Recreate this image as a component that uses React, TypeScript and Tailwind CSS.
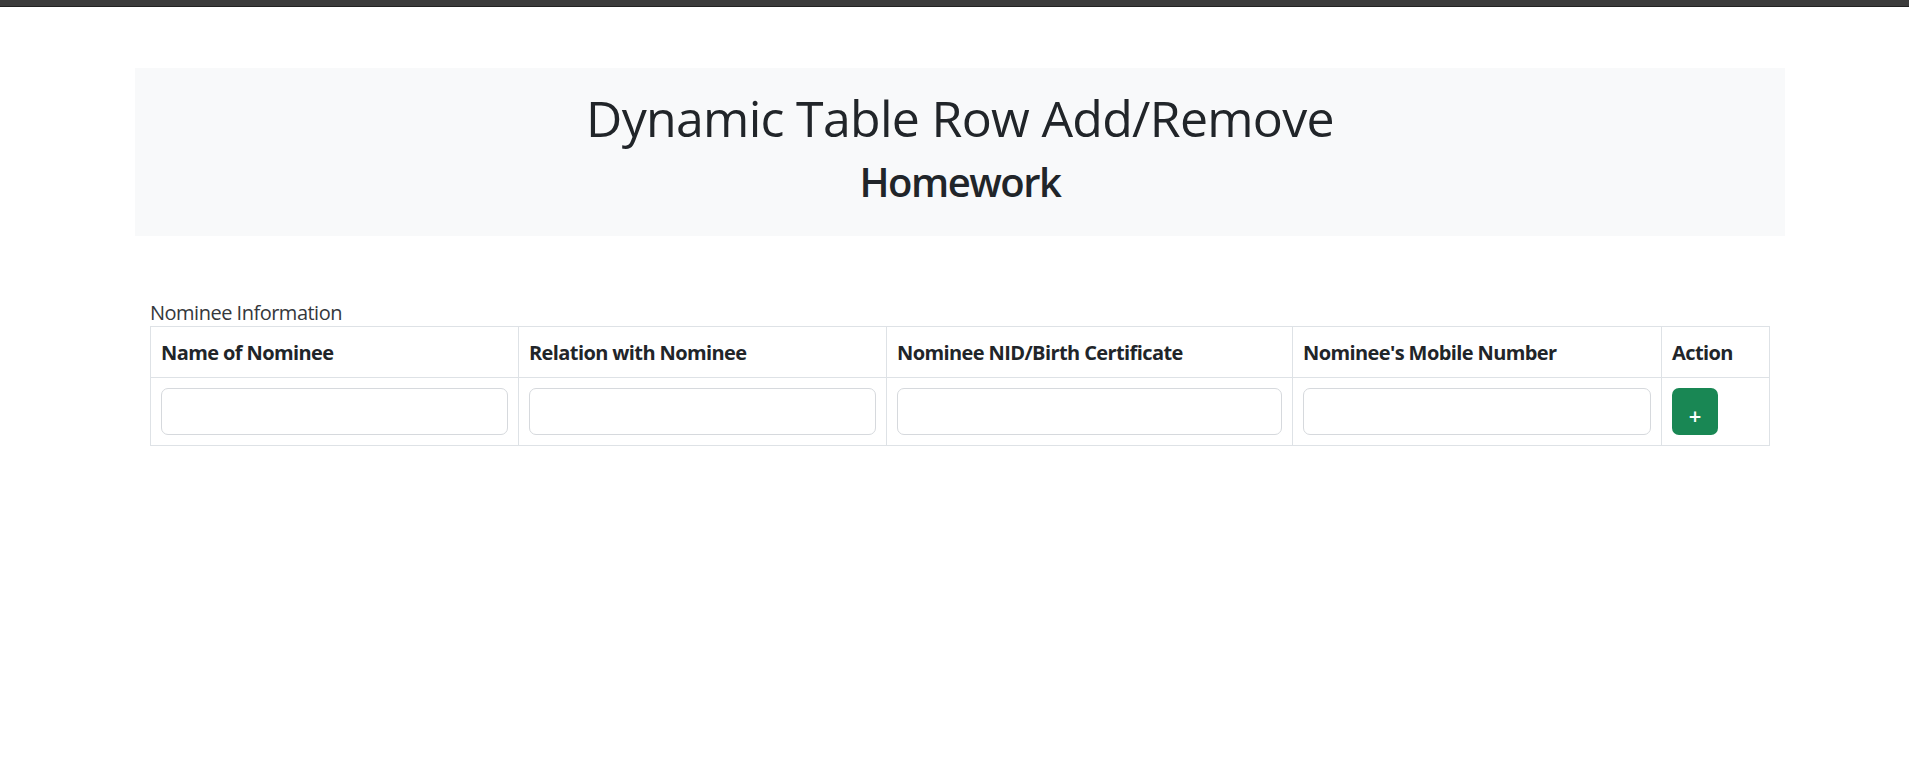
import React from 'react';

const columns = [
  { label: 'Name of Nominee', width: 'w-[368px]' },
  { label: 'Relation with Nominee', width: 'w-[368px]' },
  { label: 'Nominee NID/Birth Certificate', width: 'w-[406px]' },
  { label: "Nominee's Mobile Number", width: 'w-[369px]' },
];

const App: React.FC = () => {
  return (
    <div
      className="min-h-[766px] bg-white text-[#212529]"
      style={{ fontFamily: '"Open Sans", "Noto Sans", sans-serif' }}
    >
      {/* window edge */}
      <div className="h-[6px] bg-[#3c3c3c]" />
      <div className="h-px bg-[#222222]" />

      <div className="ml-[135px] w-[1650px] pt-[61px]">
        {/* Header */}
        <div className="bg-[#f8f9fa] p-[20px] text-center">
          <h1 className="mb-[10px] text-[50px] leading-[60px] font-normal tracking-[-0.7px]">
            Dynamic Table Row Add/Remove
          </h1>
          <h2 className="mb-[10px] text-[40px] leading-[48px] font-semibold tracking-[-1.5px]">
            Homework
          </h2>
        </div>

        {/* Nominee table */}
        <div className="px-[15px] pt-[60px]">
          <div className="h-[30px] pt-[2px] text-[20px] leading-[30px] tracking-[-0.5px] text-[#35383c]">
            Nominee Information
          </div>
          <table className="w-[1620px] table-fixed border-collapse border border-[#dee2e6] text-[20px] leading-[30px]">
            <thead>
              <tr>
                {columns.map((col) => (
                  <th
                    key={col.label}
                    className={`${col.width} border border-[#dee2e6] px-[10px] pt-[11px] pb-[9px] text-left font-bold tracking-[-0.6px]`}
                  >
                    {col.label}
                  </th>
                ))}
                <th className="w-[108px] border border-[#dee2e6] px-[10px] pt-[11px] pb-[9px] text-left font-bold tracking-[-0.6px]">
                  Action
                </th>
              </tr>
            </thead>
            <tbody>
              <tr>
                {columns.map((col) => (
                  <td key={col.label} className="border border-[#dee2e6] p-[10px]">
                    <input
                      type="text"
                      className="block h-[47px] w-full rounded-[7px] border border-[#d6d9dd] bg-white px-[15px] outline-none"
                    />
                  </td>
                ))}
                <td className="border border-[#dee2e6] p-[10px]">
                  <button
                    type="button"
                    className="flex h-[47px] w-[46px] items-center justify-center rounded-[7px] bg-[#198754] pt-[6px] text-[22px] font-semibold leading-none text-white"
                  >
                    +
                  </button>
                </td>
              </tr>
            </tbody>
          </table>
        </div>
      </div>
    </div>
  );
};

export default App;
